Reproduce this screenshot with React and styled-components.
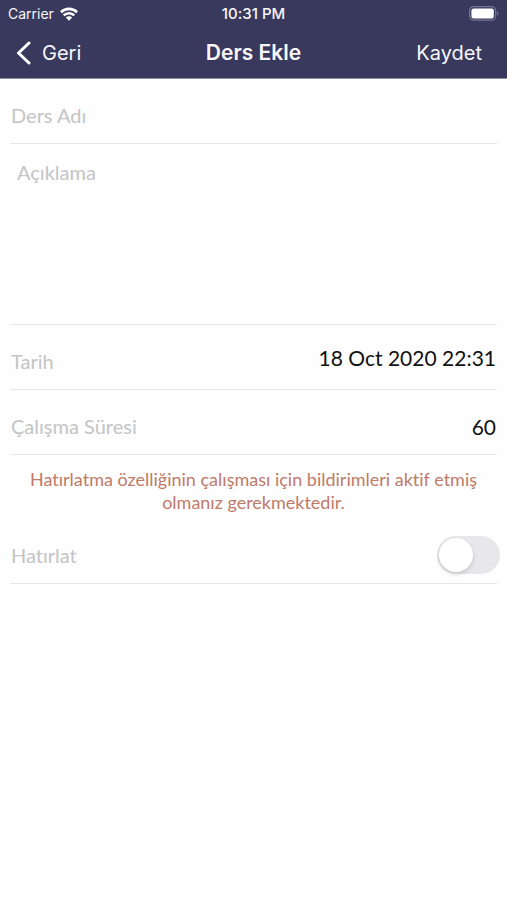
import React, { useState } from "react"
import styled, { createGlobalStyle } from "styled-components"

const GlobalStyle = createGlobalStyle`
  * {
    box-sizing: border-box;
  }
  body {
    margin: 0;
    background-color: #fefefe;
    font-family: Lato, "Open Sans", sans-serif;
    font-variant-ligatures: none;
  }
  input, textarea, button {
    font: inherit;
  }
`

const Header = styled.header`
  background-color: #38395c;
  border-bottom: 1px solid #9293a8;
  color: #f7f7fa;
  font-family: Inter, "Liberation Sans", sans-serif;
`

const StatusBar = styled.div`
  display: grid;
  grid-template-columns: 1fr auto 1fr;
  align-items: center;
  height: 27px;
  padding: 0 8px;
  font-size: 14px;
`

const Carrier = styled.span`
  display: flex;
  align-items: center;
  gap: 6px;
`

const Time = styled.time`
  font-size: 15px;
  font-weight: 500;
`

const Battery = styled.svg`
  justify-self: end;
`

const NavBar = styled.nav`
  display: grid;
  grid-template-columns: 1fr auto 1fr;
  align-items: center;
  height: 51px;
  padding: 0 16px;
  font-size: 20px;
`

const Title = styled.h1`
  margin: 0;
  font-size: 21px;
  font-weight: 600;
`

const NavButton = styled.button`
  display: flex;
  align-items: center;
  gap: 11px;
  justify-self: ${({ $side }) => $side};
  padding: ${({ $side }) => ($side === "end" ? "0 9px" : 0)};
  border: 0;
  background: none;
  color: inherit;
  cursor: pointer;
`

const Form = styled.form`
  padding: 0 10px;
`

const Row = styled.div`
  display: flex;
  align-items: center;
  justify-content: space-between;
  height: 65px;
  padding: 8px 1px 0;
  border-bottom: 1px solid #e6e6e6;
`

const Label = styled.label`
  flex: none;
  color: #c4c4c6;
  font-size: 20px;
`

const Input = styled.input`
  flex: 1;
  min-width: 0;
  height: 30px;
  padding: 0;
  border: 0;
  outline: 0;
  background: none;
  color: #111;
  font-size: 20px;
  &::placeholder {
    color: #c4c4c6;
  }
`

const ValueInput = styled(Input)`
  font-size: 21px;
  text-align: right;
`

const DateInput = styled(ValueInput)`
  padding-bottom: 8px;
`

const Description = styled.textarea`
  display: block;
  width: 100%;
  height: 181px;
  padding: 16px 7px;
  border: 0;
  border-bottom: 1px solid #e6e6e6;
  outline: 0;
  background: none;
  color: #111;
  font-size: 20px;
  line-height: 24px;
  resize: none;
  &::placeholder {
    color: #c4c4c6;
  }
`

const Notice = styled.p`
  margin: 0;
  padding: 13px 10px 5px;
  color: #c07a68;
  font-size: 18px;
  line-height: 23px;
  text-align: center;
`

const Switch = styled.input`
  appearance: none;
  flex: none;
  width: 63px;
  height: 38px;
  margin: 0 -4px 0 0;
  padding: 2px;
  border-radius: 19px;
  background-color: #e8e8ea;
  cursor: pointer;
  &::before {
    content: "";
    display: block;
    width: 34px;
    height: 34px;
    border-radius: 50%;
    background-color: #fff;
    box-shadow: 0 2px 4px rgba(0, 0, 0, 0.16);
  }
  &:checked {
    background-color: #34c759;
  }
  &:checked::before {
    margin-left: auto;
  }
`

const WifiIcon = () => (
  <svg width="18" height="14" viewBox="0 0 18 14" aria-hidden="true">
    <g fill="none" stroke="#fff" strokeWidth="2.6">
      <path d="M0.9 5.2a11.6 11.6 0 0 1 16.2 0" />
      <path d="M3.7 8.4a7.5 7.5 0 0 1 10.6 0" />
    </g>
    <path d="M9 13.8L5.8 10.6a4.6 4.6 0 0 1 6.4 0z" fill="#fff" />
  </svg>
)

const BatteryIcon = () => (
  <Battery width="30" height="15" viewBox="0 0 30 15" aria-hidden="true">
    <rect x="0.6" y="0.6" width="26" height="13.6" rx="4" fill="none" stroke="#74758f" strokeWidth="1.2" />
    <rect x="2.4" y="2.4" width="22.4" height="10" rx="2.2" fill="#fff" />
    <path d="M27.9 5.2c1.9.6 1.9 3.8 0 4.4z" fill="#74758f" />
  </Battery>
)

const BackIcon = () => (
  <svg width="15" height="24" viewBox="0 0 15 24" aria-hidden="true">
    <path
      d="M13 2L2.5 12L13 22"
      fill="none"
      stroke="#fff"
      strokeWidth="3"
      strokeLinecap="round"
      strokeLinejoin="round"
    />
  </svg>
)

export default () => {
  const [name, setName] = useState("")
  const [date, setDate] = useState("18 Oct 2020 22:31")
  const [duration, setDuration] = useState("60")

  return (
    <>
      <GlobalStyle />
      <Header>
        <StatusBar>
          <Carrier>
            Carrier
            <WifiIcon />
          </Carrier>
          <Time>10:31 PM</Time>
          <BatteryIcon />
        </StatusBar>
        <NavBar>
          <NavButton type="button" $side="start">
            <BackIcon />
            Geri
          </NavButton>
          <Title>Ders Ekle</Title>
          <NavButton type="submit" form="lesson" $side="end">
            Kaydet
          </NavButton>
        </NavBar>
      </Header>
      <Form id="lesson" onSubmit={e => e.preventDefault()}>
        <Row>
          <Input
            aria-label="Ders Adı"
            placeholder="Ders Adı"
            value={name}
            onChange={e => setName(e.target.value)}
          />
        </Row>
        <Description aria-label="Açıklama" placeholder="Açıklama" />
        <Row>
          <Label htmlFor="date">Tarih</Label>
          <DateInput id="date" value={date} onChange={e => setDate(e.target.value)} />
        </Row>
        <Row>
          <Label htmlFor="duration">Çalışma Süresi</Label>
          <ValueInput
            id="duration"
            inputMode="numeric"
            value={duration}
            onChange={e => setDuration(e.target.value)}
          />
        </Row>
        <Notice>
          Hatırlatma özelliğinin çalışması için bildirimleri aktif etmiş olmanız gerekmektedir.
        </Notice>
        <Row>
          <Label htmlFor="remind">Hatırlat</Label>
          <Switch id="remind" type="checkbox" role="switch" />
        </Row>
      </Form>
    </>
  )
}
